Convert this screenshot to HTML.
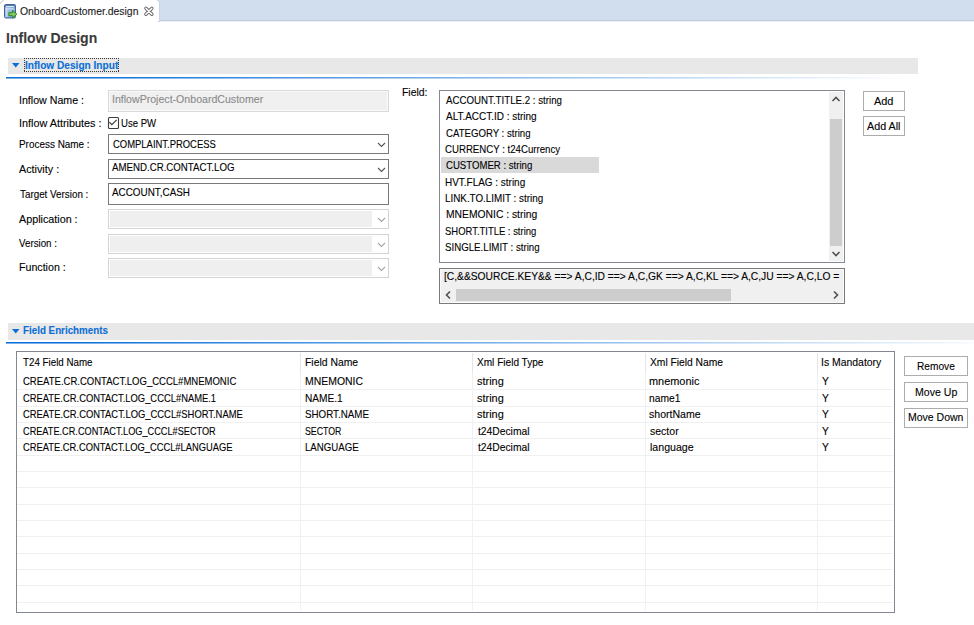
<!DOCTYPE html>
<html><head><meta charset="utf-8"><style>
html,body{margin:0;padding:0}
body{width:974px;height:625px;overflow:hidden;position:relative;background:#fff;font-family:"Liberation Sans",sans-serif}
body div{position:absolute;box-sizing:content-box}
.t{white-space:pre;line-height:14px;transform-origin:0 0;-webkit-text-stroke:0.1px currentColor}

</style></head><body>
<div class="s"><div style="left:0;top:0;width:974px;height:20px;background:#d1deee"></div>
<div style="left:0;top:20px;width:974px;height:1px;background:#c0cbdb"></div>
<div style="left:0;top:21px;width:974px;height:1px;background:#eceff4"></div>
<div style="left:-3px;top:0;width:162px;height:21px;background:#fff;border-top-right-radius:4px;border-top-left-radius:4px;box-shadow:0 0 0 1px #c9d3e1"></div>
<svg style="position:absolute;left:0;top:0" width="5" height="5" viewBox="0 0 5 5"><path d="M0.5 3.5Q0.8 0.8 3.5 0.5" fill="none" stroke="#c4c4c4" stroke-width="1"/></svg>
<div style="left:0;top:20px;width:158px;height:2px;background:#fff"></div>
<svg style="position:absolute;left:2px;top:2px" width="18" height="18" viewBox="0 0 18 18">
      <defs><linearGradient id="ig" x1="0" y1="0" x2="1" y2="1"><stop offset="0" stop-color="#c2daf2"/><stop offset="1" stop-color="#6d9ad0"/></linearGradient></defs>
      <rect x="2.5" y="2.5" width="11" height="13.5" rx="1.3" fill="url(#ig)" stroke="#3f6498" stroke-width="1"/>
      <rect x="3" y="3" width="10" height="2.2" fill="#557db3"/>
      <rect x="4" y="4.1" width="8.2" height="0.9" fill="#eef3fa"/>
      <rect x="4.2" y="6.2" width="1.2" height="8.8" fill="#dbe9f8" opacity="0.7"/>
      <rect x="4.2" y="6.2" width="7.5" height="1.2" fill="#dbe9f8" opacity="0.7"/>
      <path d="M6.9 10.7H10.6V8.5L14.9 12.2L10.6 15.9V13.7H6.9Z" fill="#86c865" stroke="#2b8a1c" stroke-width="1" stroke-linejoin="round"/>
    </svg>
<svg style="position:absolute;left:143px;top:5px" width="12" height="12" viewBox="0 0 12 12">
      <path d="M2.9 3.25L8.9 9.25M8.9 3.25L2.9 9.25" stroke="#6e6e6e" stroke-width="3.4" stroke-linecap="round"/>
      <path d="M2.9 3.25L8.9 9.25M8.9 3.25L2.9 9.25" stroke="#fff" stroke-width="1.5" stroke-linecap="round"/>
    </svg>
<div style="left:8px;top:58px;width:910px;height:16px;background:#e8e8e8"></div>
<div style="left:6px;top:77px;width:912px;height:1px;background:linear-gradient(to right,rgba(10,111,216,1) 0%,rgba(10,111,216,1) 6%,rgba(10,111,216,0) 99%)"></div>
<div style="left:6px;top:78px;width:912px;height:1px;background:linear-gradient(to right,rgba(10,111,216,.55) 0%,rgba(10,111,216,.55) 6%,rgba(10,111,216,0) 99%)"></div>
<svg style="position:absolute;left:12px;top:63px" width="8" height="5" viewBox="0 0 8 5"><path d="M0 0H7.5L3.75 4.5Z" fill="#0a6fd8"/></svg>
<div style="left:24px;top:58px;width:95px;height:1px;background:repeating-linear-gradient(90deg,#3a3a3a 0 1px,transparent 1px 2px)"></div>
<div style="left:24px;top:71px;width:95px;height:1px;background:repeating-linear-gradient(90deg,#3a3a3a 0 1px,transparent 1px 2px)"></div>
<div style="left:24px;top:58px;width:1px;height:14px;background:repeating-linear-gradient(180deg,#3a3a3a 0 1px,transparent 1px 2px)"></div>
<div style="left:118px;top:58px;width:1px;height:14px;background:repeating-linear-gradient(180deg,#3a3a3a 0 1px,transparent 1px 2px)"></div>
<div style="left:8px;top:323px;width:966px;height:17px;background:#e8e8e8"></div>
<div style="left:6px;top:342px;width:968px;height:1px;background:linear-gradient(to right,rgba(10,111,216,1) 0%,rgba(10,111,216,1) 6%,rgba(10,111,216,0.04) 100%)"></div>
<div style="left:6px;top:343px;width:968px;height:1px;background:linear-gradient(to right,rgba(10,111,216,.55) 0%,rgba(10,111,216,.55) 6%,rgba(10,111,216,0.02) 100%)"></div>
<svg style="position:absolute;left:12px;top:329px" width="8" height="5" viewBox="0 0 8 5"><path d="M0 0H7.5L3.75 4.5Z" fill="#0a6fd8"/></svg>
<div style="left:108px;top:90px;width:279px;height:20px;border:1px solid #d9d9d9;background:#f0f0f0;box-shadow:inset 0 0 0 1px #fafafa"></div>
<svg style="position:absolute;left:107px;top:116px" width="13" height="14" viewBox="0 0 13 14">
      <rect x="1.5" y="1.5" width="10" height="11" rx="1" fill="#fff" stroke="#3c3c3c" stroke-width="1.1"/>
      <path d="M2.4 6.1L4.8 8.7L9.7 3.9" fill="none" stroke="#3c3c3c" stroke-width="1.2"/>
    </svg>
<div style="left:108px;top:134px;width:279px;height:18px;border:1px solid #7a7a7a;background:#fff"></div>
<svg style="position:absolute;left:377px;top:142.0px" width="10" height="6" viewBox="0 0 10 6"><path d="M1 1L4.5 4.5L8 1" fill="none" stroke="#555" stroke-width="1.1"/></svg>
<div style="left:108px;top:159px;width:279px;height:18px;border:1px solid #7a7a7a;background:#fff"></div>
<svg style="position:absolute;left:377px;top:167.0px" width="10" height="6" viewBox="0 0 10 6"><path d="M1 1L4.5 4.5L8 1" fill="none" stroke="#555" stroke-width="1.1"/></svg>
<div style="left:108px;top:183px;width:279px;height:20px;border:1px solid #7a7a7a;background:#fff"></div>
<div style="left:108px;top:209px;width:279px;height:18px;border:1px solid #d4d4d4;background:#fff"></div>
<div style="left:110px;top:211px;width:262px;height:16px;background:#efefef"></div>
<svg style="position:absolute;left:377px;top:217.0px" width="10" height="6" viewBox="0 0 10 6"><path d="M1 1L4.5 4.5L8 1" fill="none" stroke="#a6a6a6" stroke-width="1.1"/></svg>
<div style="left:108px;top:234px;width:279px;height:18px;border:1px solid #d4d4d4;background:#fff"></div>
<div style="left:110px;top:236px;width:262px;height:16px;background:#efefef"></div>
<svg style="position:absolute;left:377px;top:242.0px" width="10" height="6" viewBox="0 0 10 6"><path d="M1 1L4.5 4.5L8 1" fill="none" stroke="#a6a6a6" stroke-width="1.1"/></svg>
<div style="left:108px;top:258px;width:279px;height:18px;border:1px solid #d4d4d4;background:#fff"></div>
<div style="left:110px;top:260px;width:262px;height:16px;background:#efefef"></div>
<svg style="position:absolute;left:377px;top:266.0px" width="10" height="6" viewBox="0 0 10 6"><path d="M1 1L4.5 4.5L8 1" fill="none" stroke="#a6a6a6" stroke-width="1.1"/></svg>
<div style="left:439px;top:90px;width:404px;height:171px;border:1px solid #828790;background:#fff"></div>
<div style="left:441px;top:157px;width:158px;height:16px;background:#d9d9d9"></div>
<div style="left:829px;top:92px;width:14px;height:169px;background:#f0f0f0"></div>
<div style="left:830px;top:119px;width:12px;height:127px;background:#cdcdcd"></div>
<svg style="position:absolute;left:831px;top:95px" width="10" height="8" viewBox="0 0 10 8"><path d="M1.5 6L5 2.5L8.5 6" fill="none" stroke="#505050" stroke-width="1.6"/></svg>
<svg style="position:absolute;left:831px;top:250px" width="10" height="8" viewBox="0 0 10 8"><path d="M1.5 2L5 5.5L8.5 2" fill="none" stroke="#505050" stroke-width="1.6"/></svg>
<div style="left:439px;top:268px;width:404px;height:34px;border:1px solid #7a7a7a;background:#f0f0f0;box-shadow:inset 0 0 0 1px #fafafa"></div>
<div style="left:441px;top:288px;width:402px;height:14px;background:#f0f0f0"></div>
<div style="left:456px;top:289px;width:275px;height:12px;background:#cdcdcd"></div>
<svg style="position:absolute;left:443px;top:290px" width="10" height="10" viewBox="0 0 10 10"><path d="M7 1.5L3.5 5L7 8.5" fill="none" stroke="#505050" stroke-width="1.6"/></svg>
<svg style="position:absolute;left:831px;top:290px" width="10" height="10" viewBox="0 0 10 10"><path d="M3 1.5L6.5 5L3 8.5" fill="none" stroke="#505050" stroke-width="1.6"/></svg>
<div style="left:863px;top:91px;width:40px;height:18px;border:1px solid #adadad;background:#fff"></div>
<div style="left:863px;top:116px;width:40px;height:18px;border:1px solid #adadad;background:#fff"></div>
<div style="left:904px;top:356px;width:62px;height:18px;border:1px solid #adadad;background:#fff"></div>
<div style="left:904px;top:382px;width:62px;height:18px;border:1px solid #adadad;background:#fff"></div>
<div style="left:904px;top:408px;width:62px;height:18px;border:1px solid #adadad;background:#fff"></div>
<div style="left:16px;top:351px;width:877px;height:260px;border:1px solid #828790;background:#fff"></div>
<div style="left:17px;top:389px;width:876px;height:1px;background:#f0f0f0"></div>
<div style="left:17px;top:406px;width:876px;height:1px;background:#f0f0f0"></div>
<div style="left:17px;top:422px;width:876px;height:1px;background:#f0f0f0"></div>
<div style="left:17px;top:438px;width:876px;height:1px;background:#f0f0f0"></div>
<div style="left:17px;top:455px;width:876px;height:1px;background:#f0f0f0"></div>
<div style="left:17px;top:471px;width:876px;height:1px;background:#f0f0f0"></div>
<div style="left:17px;top:487px;width:876px;height:1px;background:#f0f0f0"></div>
<div style="left:17px;top:504px;width:876px;height:1px;background:#f0f0f0"></div>
<div style="left:17px;top:520px;width:876px;height:1px;background:#f0f0f0"></div>
<div style="left:17px;top:536px;width:876px;height:1px;background:#f0f0f0"></div>
<div style="left:17px;top:553px;width:876px;height:1px;background:#f0f0f0"></div>
<div style="left:17px;top:569px;width:876px;height:1px;background:#f0f0f0"></div>
<div style="left:17px;top:585px;width:876px;height:1px;background:#f0f0f0"></div>
<div style="left:17px;top:602px;width:876px;height:1px;background:#f0f0f0"></div>
<div style="left:300px;top:353px;width:1px;height:20px;background:#e5e5e5"></div>
<div style="left:300px;top:373px;width:1px;height:238px;background:#eef1f5"></div>
<div style="left:472px;top:353px;width:1px;height:20px;background:#e5e5e5"></div>
<div style="left:472px;top:373px;width:1px;height:238px;background:#eef1f5"></div>
<div style="left:645px;top:353px;width:1px;height:20px;background:#e5e5e5"></div>
<div style="left:645px;top:373px;width:1px;height:238px;background:#eef1f5"></div>
<div style="left:817px;top:353px;width:1px;height:20px;background:#e5e5e5"></div>
<div style="left:817px;top:373px;width:1px;height:238px;background:#eef1f5"></div></div>
<div id="tab" class="t" style="left:19.67px;top:5px;font-size:10.3px;font-weight:normal;color:#1a1a1a;transform:scaleX(1.0091)">OnboardCustomer.design</div>
<div id="title" class="t" style="left:6.48px;top:32px;font-size:13.8px;font-weight:bold;color:#3b3b3b;transform:scaleX(1.0178)">Inflow Design</div>
<div id="sec1" class="t" style="left:24.76px;top:59px;font-size:10px;font-weight:bold;color:#0b6fd6;transform:scaleX(1.0115)">Inflow Design Input</div>
<div id="sec2" class="t" style="left:23.35px;top:324px;font-size:10px;font-weight:bold;color:#0b6fd6;transform:scaleX(0.9800)">Field Enrichments</div>
<div id="lab0" class="t" style="left:18.96px;top:94px;font-size:10.3px;font-weight:normal;color:#000;transform:scaleX(1.0329)">Inflow Name :</div>
<div id="lab1" class="t" style="left:18.75px;top:117px;font-size:10.3px;font-weight:normal;color:#000;transform:scaleX(1.0526)">Inflow Attributes :</div>
<div id="lab2" class="t" style="left:18.98px;top:138px;font-size:10.3px;font-weight:normal;color:#000;transform:scaleX(0.9643)">Process Name :</div>
<div id="lab3" class="t" style="left:19.29px;top:163px;font-size:10.3px;font-weight:normal;color:#000;transform:scaleX(1.0473)">Activity :</div>
<div id="lab4" class="t" style="left:20.14px;top:188px;font-size:10.3px;font-weight:normal;color:#000;transform:scaleX(0.9550)">Target Version :</div>
<div id="lab5" class="t" style="left:19.28px;top:213px;font-size:10.3px;font-weight:normal;color:#000;transform:scaleX(1.0444)">Application :</div>
<div id="lab6" class="t" style="left:19.39px;top:237px;font-size:10.3px;font-weight:normal;color:#000;transform:scaleX(0.9466)">Version :</div>
<div id="lab7" class="t" style="left:18.65px;top:261px;font-size:10.3px;font-weight:normal;color:#000;transform:scaleX(1.0335)">Function :</div>
<div id="field" class="t" style="left:401.86px;top:86px;font-size:10.3px;font-weight:normal;color:#000;transform:scaleX(1.0132)">Field:</div>
<div id="inname" class="t" style="left:112.07px;top:93px;font-size:10.3px;font-weight:normal;color:#8a8a8a;transform:scaleX(1.0280)">InflowProject-OnboardCustomer</div>
<div id="usepw" class="t" style="left:120.61px;top:117px;font-size:10.3px;font-weight:normal;color:#000;transform:scaleX(0.9302)">Use PW</div>
<div id="proc" class="t" style="left:112.80px;top:138px;font-size:10.3px;font-weight:normal;color:#000;transform:scaleX(0.9170)">COMPLAINT.PROCESS</div>
<div id="act" class="t" style="left:112.24px;top:161px;font-size:10.3px;font-weight:normal;color:#000;transform:scaleX(0.9403)">AMEND.CR.CONTACT.LOG</div>
<div id="tver" class="t" style="left:112.23px;top:186px;font-size:10.3px;font-weight:normal;color:#000;transform:scaleX(0.9597)">ACCOUNT,CASH</div>
<div id="li0" class="t" style="left:446.28px;top:94px;font-size:10.3px;font-weight:normal;color:#000;transform:scaleX(0.9427)">ACCOUNT.TITLE.2 : string</div>
<div id="li1" class="t" style="left:446.22px;top:110px;font-size:10.3px;font-weight:normal;color:#000;transform:scaleX(0.9673)">ALT.ACCT.ID : string</div>
<div id="li2" class="t" style="left:445.75px;top:127px;font-size:10.3px;font-weight:normal;color:#000;transform:scaleX(0.9344)">CATEGORY : string</div>
<div id="li3" class="t" style="left:445.39px;top:143px;font-size:10.3px;font-weight:normal;color:#000;transform:scaleX(0.9371)">CURRENCY : t24Currency</div>
<div id="li4" class="t" style="left:445.85px;top:159px;font-size:10.3px;font-weight:normal;color:#000;transform:scaleX(0.9324)">CUSTOMER : string</div>
<div id="li5" class="t" style="left:444.94px;top:176px;font-size:10.3px;font-weight:normal;color:#000;transform:scaleX(0.9662)">HVT.FLAG : string</div>
<div id="li6" class="t" style="left:444.95px;top:192px;font-size:10.3px;font-weight:normal;color:#000;transform:scaleX(0.9560)">LINK.TO.LIMIT : string</div>
<div id="li7" class="t" style="left:445.70px;top:208px;font-size:10.3px;font-weight:normal;color:#000;transform:scaleX(1.0026)">MNEMONIC : string</div>
<div id="li8" class="t" style="left:445.11px;top:225px;font-size:10.3px;font-weight:normal;color:#000;transform:scaleX(0.9183)">SHORT.TITLE : string</div>
<div id="li9" class="t" style="left:445.22px;top:241px;font-size:10.3px;font-weight:normal;color:#000;transform:scaleX(0.9413)">SINGLE.LIMIT : string</div>
<div id="src" class="t" style="left:444.05px;top:270px;font-size:10.3px;font-weight:normal;color:#000;transform:scaleX(0.9959)">[C,&amp;&amp;SOURCE.KEY&amp;&amp; ==&gt; A,C,ID ==&gt; A,C,GK ==&gt; A,C,KL ==&gt; A,C,JU ==&gt; A,C,LO =</div>
<div id="b_add" class="t" style="left:874.26px;top:95px;font-size:10.3px;font-weight:normal;color:#000;transform:scaleX(1.0614)">Add</div>
<div id="b_addall" class="t" style="left:867.28px;top:120px;font-size:10.3px;font-weight:normal;color:#000;transform:scaleX(1.0424)">Add All</div>
<div id="b_rem" class="t" style="left:916.87px;top:360px;font-size:10.3px;font-weight:normal;color:#000;transform:scaleX(0.9863)">Remove</div>
<div id="b_up" class="t" style="left:914.76px;top:386px;font-size:10.3px;font-weight:normal;color:#000;transform:scaleX(1.0265)">Move Up</div>
<div id="b_down" class="t" style="left:907.82px;top:411px;font-size:10.3px;font-weight:normal;color:#000;transform:scaleX(1.0190)">Move Down</div>
<div id="h0" class="t" style="left:22.90px;top:356px;font-size:10.3px;font-weight:normal;color:#000;transform:scaleX(0.9496)">T24 Field Name</div>
<div id="h1" class="t" style="left:304.82px;top:356px;font-size:10.3px;font-weight:normal;color:#000;transform:scaleX(1.0084)">Field Name</div>
<div id="h2" class="t" style="left:477.08px;top:356px;font-size:10.3px;font-weight:normal;color:#000;transform:scaleX(0.9784)">Xml Field Type</div>
<div id="h3" class="t" style="left:650.12px;top:356px;font-size:10.3px;font-weight:normal;color:#000;transform:scaleX(0.9967)">Xml Field Name</div>
<div id="h4" class="t" style="left:821.10px;top:356px;font-size:10.3px;font-weight:normal;color:#000;transform:scaleX(1.0130)">Is Mandatory</div>
<div id="r0c0" class="t" style="left:22.79px;top:375px;font-size:10.3px;font-weight:normal;color:#000;transform:scaleX(0.9242)">CREATE.CR.CONTACT.LOG_CCCL#MNEMONIC</div>
<div id="r0c1" class="t" style="left:304.66px;top:375px;font-size:10.3px;font-weight:normal;color:#000;transform:scaleX(1.0134)">MNEMONIC</div>
<div id="r0c2" class="t" style="left:477.23px;top:375px;font-size:10.3px;font-weight:normal;color:#000;transform:scaleX(1.0612)">string</div>
<div id="r0c3" class="t" style="left:649.13px;top:375px;font-size:10.3px;font-weight:normal;color:#000;transform:scaleX(1.0605)">mnemonic</div>
<div id="r0c4" class="t" style="left:821.63px;top:375px;font-size:10.3px;font-weight:normal;color:#000;transform:scaleX(1.0024)">Y</div>
<div id="r1c0" class="t" style="left:22.84px;top:392px;font-size:10.3px;font-weight:normal;color:#000;transform:scaleX(0.9112)">CREATE.CR.CONTACT.LOG_CCCL#NAME.1</div>
<div id="r1c1" class="t" style="left:304.68px;top:392px;font-size:10.3px;font-weight:normal;color:#000;transform:scaleX(0.9839)">NAME.1</div>
<div id="r1c2" class="t" style="left:477.23px;top:392px;font-size:10.3px;font-weight:normal;color:#000;transform:scaleX(1.0612)">string</div>
<div id="r1c3" class="t" style="left:649.15px;top:392px;font-size:10.3px;font-weight:normal;color:#000;transform:scaleX(0.9969)">name1</div>
<div id="r1c4" class="t" style="left:821.63px;top:392px;font-size:10.3px;font-weight:normal;color:#000;transform:scaleX(1.0024)">Y</div>
<div id="r2c0" class="t" style="left:22.84px;top:408px;font-size:10.3px;font-weight:normal;color:#000;transform:scaleX(0.9123)">CREATE.CR.CONTACT.LOG_CCCL#SHORT.NAME</div>
<div id="r2c1" class="t" style="left:305.09px;top:408px;font-size:10.3px;font-weight:normal;color:#000;transform:scaleX(0.9494)">SHORT.NAME</div>
<div id="r2c2" class="t" style="left:477.23px;top:408px;font-size:10.3px;font-weight:normal;color:#000;transform:scaleX(1.0612)">string</div>
<div id="r2c3" class="t" style="left:649.34px;top:408px;font-size:10.3px;font-weight:normal;color:#000;transform:scaleX(1.0250)">shortName</div>
<div id="r2c4" class="t" style="left:821.63px;top:408px;font-size:10.3px;font-weight:normal;color:#000;transform:scaleX(1.0024)">Y</div>
<div id="r3c0" class="t" style="left:22.68px;top:425px;font-size:10.3px;font-weight:normal;color:#000;transform:scaleX(0.8911)">CREATE.CR.CONTACT.LOG_CCCL#SECTOR</div>
<div id="r3c1" class="t" style="left:304.68px;top:425px;font-size:10.3px;font-weight:normal;color:#000;transform:scaleX(0.8535)">SECTOR</div>
<div id="r3c2" class="t" style="left:477.76px;top:425px;font-size:10.3px;font-weight:normal;color:#000;transform:scaleX(0.9996)">t24Decimal</div>
<div id="r3c3" class="t" style="left:650.17px;top:425px;font-size:10.3px;font-weight:normal;color:#000;transform:scaleX(1.0213)">sector</div>
<div id="r3c4" class="t" style="left:821.63px;top:425px;font-size:10.3px;font-weight:normal;color:#000;transform:scaleX(1.0024)">Y</div>
<div id="r4c0" class="t" style="left:22.84px;top:441px;font-size:10.3px;font-weight:normal;color:#000;transform:scaleX(0.9077)">CREATE.CR.CONTACT.LOG_CCCL#LANGUAGE</div>
<div id="r4c1" class="t" style="left:304.91px;top:441px;font-size:10.3px;font-weight:normal;color:#000;transform:scaleX(0.9374)">LANGUAGE</div>
<div id="r4c2" class="t" style="left:477.76px;top:441px;font-size:10.3px;font-weight:normal;color:#000;transform:scaleX(0.9996)">t24Decimal</div>
<div id="r4c3" class="t" style="left:649.65px;top:441px;font-size:10.3px;font-weight:normal;color:#000;transform:scaleX(1.0301)">language</div>
<div id="r4c4" class="t" style="left:821.63px;top:441px;font-size:10.3px;font-weight:normal;color:#000;transform:scaleX(1.0024)">Y</div>
</body></html>
